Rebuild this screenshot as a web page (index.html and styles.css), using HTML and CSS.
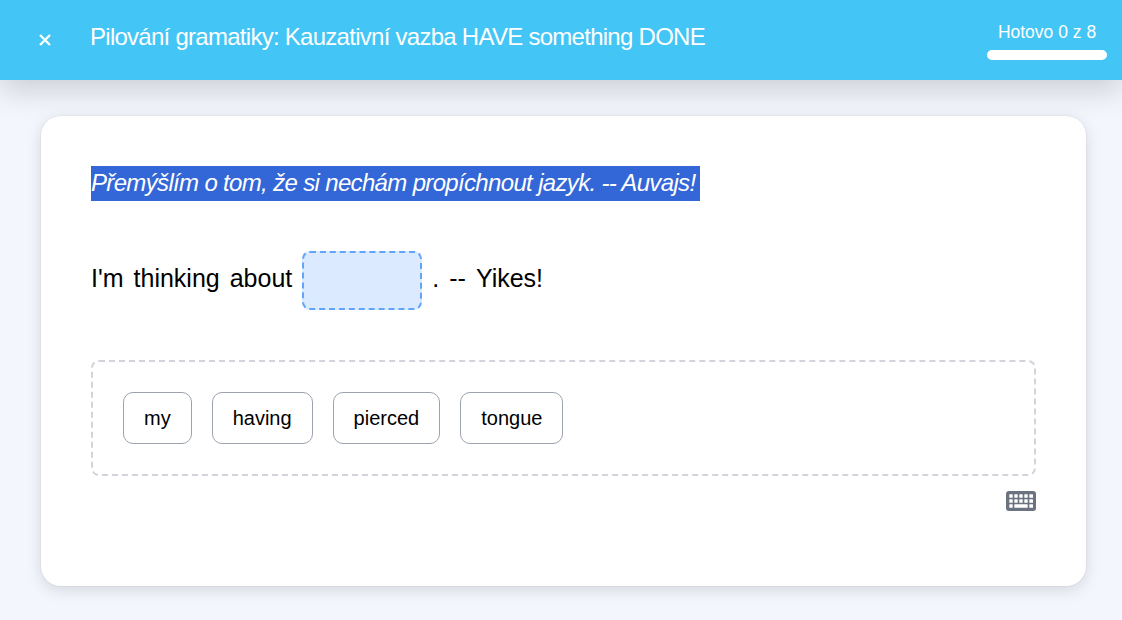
FILE: index.html
```html
<!DOCTYPE html>
<html lang="cs">
<head>
<meta charset="utf-8">
<title>Pilování gramatiky</title>
<link rel="stylesheet" href="styles.css">
</head>
<body>
<header class="topbar">
  <button class="close" type="button" aria-label="Zavřít">
    <svg class="close-icon" viewBox="0 0 14 14" width="14" height="14"><path d="M2 2 L12 12 M12 2 L2 12" fill="none" stroke="#fff" stroke-width="2.300"/></svg>
  </button>
  <h1 class="title">Pilování gramatiky: Kauzativní vazba HAVE something DONE</h1>
  <div class="progress">
    <div class="progress-label">Hotovo 0 z 8</div>
    <div class="progress-bar"></div>
  </div>
</header>
<main class="card">
  <div class="prompt"><span class="prompt-text">Přemýšlím o tom, že si nechám propíchnout jazyk. -- Auvajs!</span></div>
  <div class="sentence">
    <span class="tok">I'm</span><span class="tok">thinking</span><span class="tok">about</span>
    <span class="blank"></span>
    <span class="tok">.</span><span class="tok">--</span><span class="tok">Yikes!</span>
  </div>
  <div class="bank">
    <button class="word" type="button">my</button>
    <button class="word" type="button">having</button>
    <button class="word" type="button">pierced</button>
    <button class="word" type="button">tongue</button>
  </div>
  <div class="tools">
    <svg class="kbd" viewBox="0 0 30 20" width="30" height="20">
      <rect width="30" height="20" rx="3" fill="#6b7280"/>
      <g fill="#fff">
        <rect x="3.300" y="3.300" width="3.400" height="3.400" rx=".5"/><rect x="8.300" y="3.300" width="3.400" height="3.400" rx=".5"/><rect x="13.300" y="3.300" width="3.400" height="3.400" rx=".5"/><rect x="18.300" y="3.300" width="3.400" height="3.400" rx=".5"/><rect x="23.300" y="3.300" width="3.700" height="3.400" rx=".5"/>
        <rect x="3.300" y="8.300" width="3.400" height="3.400" rx=".5"/><rect x="8.300" y="8.300" width="3.400" height="3.400" rx=".5"/><rect x="13.300" y="8.300" width="3.400" height="3.400" rx=".5"/><rect x="18.300" y="8.300" width="3.400" height="3.400" rx=".5"/><rect x="23.300" y="8.300" width="3.700" height="3.400" rx=".5"/>
        <rect x="3.300" y="13.300" width="3.400" height="3.400" rx=".5"/><rect x="8.300" y="13.300" width="13.400" height="3.400" rx=".5"/><rect x="23.300" y="13.300" width="3.700" height="3.400" rx=".5"/>
      </g>
    </svg>
  </div>
</main>
</body>
</html>
```
FILE: styles.css
```css
* { box-sizing: border-box; }
html, body { margin: 0; height: 100%; }
body {
  background: #f3f7fd;
  font-family: "Liberation Sans", Arial, sans-serif;
  color: #000;
  overflow: hidden;
}
.topbar {
  height: 80px;
  background: #43c5f5;
  color: #fff;
  display: flex;
  align-items: center;
  padding: 0 15px 0 38px;
  box-shadow: 0 10px 30px rgba(0,0,0,.17);
  position: relative;
}
.close {
  border: 0;
  background: none;
  padding: 0;
  width: 52px;
  height: 14px;
  margin-bottom: 1px;
  display: flex;
  align-items: center;
}
.title {
  margin: 0 0 6px;
  font-size: 24px;
  letter-spacing: -0.73px;
  font-weight: 400;
  flex: 1;
}
.progress {
  width: 120px;
  display: flex;
  flex-direction: column;
  align-items: center;
  margin-top: 1px;
}
.progress-label { font-size: 17.5px; line-height: 20px; margin-bottom: 8px; }
.progress-bar { width: 120px; height: 10px; border-radius: 5px; background: #fff; }
.card {
  margin: 36px 36px 0 41px;
  height: 470px;
  background: #fff;
  border-radius: 20px;
  padding: 50px;
  box-shadow: 0 0 0 1px rgba(0,0,0,.03), 0 4px 16px rgba(0,0,0,.13);
}
.prompt { display: flex; }
.prompt-text {
  background: #3366d6;
  color: #fff;
  font-style: italic;
  font-size: 24px;
  letter-spacing: -0.66px;
  line-height: 33px;
  padding: 0 5px 2px 0;
}
.sentence {
  margin-top: 50px;
  display: flex;
  align-items: center;
  gap: 10px;
  font-size: 25px;
  height: 59px;
}
.tok { margin-top: -5px; }
.blank {
  width: 120px;
  height: 59px;
  background: #dbeafe;
  border: 2px dashed #60a5fa;
  border-radius: 8px;
}
.bank {
  margin-top: 50px;
  height: 116px;
  border: 2px dashed #d1d5db;
  border-radius: 8px;
  padding: 30px;
  display: flex;
  align-items: flex-start;
  gap: 20px;
}
.word {
  height: 52px;
  padding: 0 20px;
  background: #fff;
  border: 1px solid #9ca3af;
  border-radius: 10px;
  font: inherit;
  font-size: 20px;
  color: #000;
}
.tools {
  margin-top: 15px;
  display: flex;
  justify-content: flex-end;
}
.kbd { display: block; }
```
